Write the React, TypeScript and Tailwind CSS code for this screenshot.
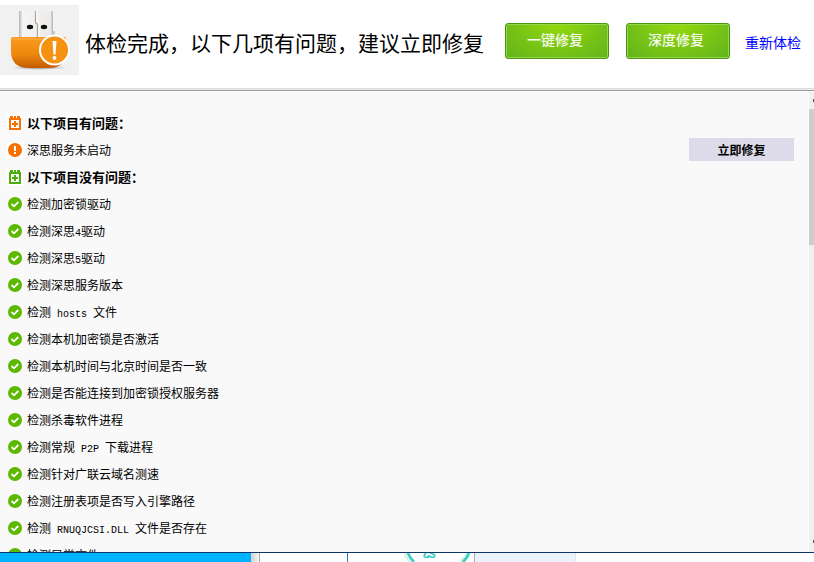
import type { ReactNode } from 'react';

type Status = 'ok' | 'error';

type CheckItem = {
    text: ReactNode;
    status: Status;
};

const Latin = ({ children }: { children: string }) => (
    <span className="whitespace-pre font-['Liberation_Mono',monospace] text-[10px] leading-none">{children}</span>
);

const problems: CheckItem[] = [{ text: '深思服务未启动', status: 'error' }];

const passed: CheckItem[] = [
    { text: '检测加密锁驱动', status: 'ok' },
    { text: <>检测深思<Latin>4</Latin>驱动</>, status: 'ok' },
    { text: <>检测深思<Latin>5</Latin>驱动</>, status: 'ok' },
    { text: '检测深思服务版本', status: 'ok' },
    { text: <>检测<Latin>{' hosts '}</Latin>文件</>, status: 'ok' },
    { text: '检测本机加密锁是否激活', status: 'ok' },
    { text: '检测本机时间与北京时间是否一致', status: 'ok' },
    { text: '检测是否能连接到加密锁授权服务器', status: 'ok' },
    { text: '检测杀毒软件进程', status: 'ok' },
    { text: <>检测常规<Latin>{' P2P '}</Latin>下载进程</>, status: 'ok' },
    { text: '检测针对广联云域名测速', status: 'ok' },
    { text: '检测注册表项是否写入引擎路径', status: 'ok' },
    { text: <>检测<Latin>{' RNUQJCSI.DLL '}</Latin>文件是否存在</>, status: 'ok' },
    { text: '检测异常文件', status: 'ok' },
];

function UsbIcon() {
    return (
        <svg className="h-[70px] w-[79px] shrink-0" viewBox="0 0 79 70">
            <defs>
                <linearGradient id="metal" x1="0" x2="1">
                    <stop offset="0" stopColor="#b4b4b4" />
                    <stop offset="0.1" stopColor="#f6f5f3" />
                    <stop offset="0.88" stopColor="#ecebe9" />
                    <stop offset="0.92" stopColor="#bcbcbc" />
                    <stop offset="1" stopColor="#d2d2d2" />
                </linearGradient>
                <linearGradient id="body" x1="0" y1="0" x2="0" y2="1">
                    <stop offset="0" stopColor="#f99a1e" />
                    <stop offset="0.55" stopColor="#ee890f" />
                    <stop offset="1" stopColor="#c45a00" />
                </linearGradient>
                <radialGradient id="shade">
                    <stop offset="0" stopColor="#444" stopOpacity="0.8" />
                    <stop offset="1" stopColor="#999" stopOpacity="0" />
                </radialGradient>
            </defs>
            <rect width="79" height="70" fill="#f1f1f1" />
            <ellipse cx="39" cy="62.5" rx="29" ry="2.5" fill="url(#shade)" />
            <path d="M19 6h34v20h2v7H19z" fill="url(#metal)" />
            <path d="M35.5 6v12l2 1v14" fill="none" stroke="#a5a5a5" strokeWidth="1.2" />
            <path d="M37 6v11l2 1v15" fill="none" stroke="#fff" strokeWidth="1" />
            <ellipse cx="30" cy="22" rx="3.2" ry="2.2" fill="#111" />
            <ellipse cx="44" cy="22" rx="3.2" ry="2.2" fill="#111" />
            <path d="M11 34q0-2 2-2h51q2 0 2 2v12q0 17-17 17H29Q11 63 11 46z" fill="url(#body)" />
            <path d="M12 34h53" stroke="#fdb34b" strokeWidth="1" />
            <circle cx="54.5" cy="45" r="15.5" fill="#fff" />
            <circle cx="54.5" cy="45" r="13.5" fill="#f59211" />
            <path d="M52.5 36h4l-1 13.5h-2z" fill="#fff" />
            <circle cx="54.5" cy="53" r="1.9" fill="#fff" />
        </svg>
    );
}

function GroupIcon({ color }: { color: string }) {
    return (
        <svg className="size-4 shrink-0 bg-white" viewBox="0 0 16 16" fill={color} shapeRendering="crispEdges">
            <path d="M3 1h3v2H3zM7 1h2v2H7zM10 1h3v2h-3z" />
            <path fillRule="evenodd" d="M2 3h12v12H2zM4 5v8h8V5z" />
            <path d="M7 6h2v2h2v2H9v2H7v-2H5V8h2z" />
        </svg>
    );
}

function StatusIcon({ status }: { status: Status }) {
    if (status === 'error') {
        return (
            <svg className="size-4 shrink-0 bg-white" viewBox="0 0 16 16">
                <circle cx="8" cy="8" r="7" fill="#f87000" />
                <path d="M7 4h2v5H7zM7 10h2v2H7z" fill="#fff" />
            </svg>
        );
    }
    return (
        <svg className="size-4 shrink-0" viewBox="0 0 16 16">
            <circle cx="8" cy="8" r="7" fill="#5cb800" />
            <path d="M4.5 8 7 10.3l4.3-4.3" fill="none" stroke="#fff" strokeWidth="1.8" />
        </svg>
    );
}

function GreenButton({ children }: { children: string }) {
    return (
        <button
            type="button"
            className="h-9 w-[104px] shrink-0 rounded-[3px] border border-[#489613] bg-radial-[at_50%_0%] from-[#93d90c] to-[#61b31d] pr-1 pb-1 text-sm font-medium text-[#f7fbef] shadow-[inset_0_0_0_1px_#98d64c]"
        >
            {children}
        </button>
    );
}

function Heading({ color, children }: { color: string; children: string }) {
    return (
        <h2 className="flex h-[27px] items-center gap-1 text-[13px] font-bold">
            <GroupIcon color={color} />
            {children}
        </h2>
    );
}

function Row({ item }: { item: CheckItem }) {
    return (
        <li className="flex h-[27px] items-center gap-1">
            <StatusIcon status={item.status} />
            <span className="leading-4">{item.text}</span>
            {item.status === 'error' && (
                <button type="button" className="mr-[14px] ml-auto h-[23px] w-[105px] bg-[#dddbe9] text-xs font-bold">
                    立即修复
                </button>
            )}
        </li>
    );
}

function Scrollbar() {
    return (
        <div className="flex w-[6px] shrink-0 flex-col items-end border-l border-white bg-[#f0f0f0]">
            <div className="flex h-[17px] w-full items-center justify-end">
                <span className="h-[3px] w-px bg-[#505050]" />
            </div>
            <div className="h-[136px] w-full bg-[#cdcdcd]" />
            <div className="mt-auto flex h-[22px] w-full items-center justify-end">
                <span className="h-[3px] w-px bg-[#505050]" />
            </div>
        </div>
    );
}

// Slice of the desktop visible under the window
function Backdrop() {
    return (
        <div className="flex h-[10px] shrink-0 border-t border-[#0c3768] bg-white">
            <div className="w-[251px] bg-[#00b3ff]" />
            <div className="w-[9px] border-r border-[#aaa] bg-linear-to-r from-[#d2d2d2] to-[#f4f4f4]" />
            <div className="w-[88px] border-r border-[#2d7bcb]" />
            <div className="flex w-[127px] justify-end border-r border-[#aaa]">
                <svg className="h-[9px] w-[70px]" viewBox="0 0 70 9" fill="none">
                    <path d="M1 0q3 6 8 9M65 0q-3 6-8 9" stroke="#d8f4ef" strokeWidth="5" />
                    <path d="M4 0q2 5 6 9M65 0q-2 5-6 9" stroke="#3bcdc4" strokeWidth="2.5" />
                    <path d="M22 0q-3 3-1 4 3 1 4-1 3 2 5 1 2-2-1-3l-3-1" stroke="#3bcdc4" strokeWidth="1.8" />
                </svg>
            </div>
            <div className="w-[101px] border-r border-[#e2e6ec] bg-[#ecf2fc]" />
        </div>
    );
}

export default function App() {
    return (
        <div className="flex h-screen flex-col overflow-hidden bg-white font-['Noto_Sans_CJK_SC',sans-serif] text-xs text-black">
            <header className="flex h-[88px] shrink-0 items-center pb-2">
                <UsbIcon />
                <h1 className="ml-[6px] shrink-0 pt-1 text-[21px] leading-8 whitespace-nowrap">
                    体检完成，以下几项有问题，建议立即修复
                </h1>
                <div className="ml-[21px] flex gap-[17px] pt-[2px]">
                    <GreenButton>一键修复</GreenButton>
                    <GreenButton>深度修复</GreenButton>
                </div>
                <a href="#recheck" className="ml-[15px] shrink-0 pt-1 text-sm whitespace-nowrap text-[#0000ff]">
                    重新体检
                </a>
            </header>

            <div className="h-[3px] shrink-0 border-t border-b border-t-[#dcdcdc] border-b-[#999] bg-[#eee]" />

            <main className="flex min-h-0 flex-1 overflow-hidden border-t border-white bg-[#f9f9f9]">
                <div className="min-w-0 flex-1 overflow-hidden pt-[17px] pl-[7px]">
                    <Heading color="#f87000">以下项目有问题：</Heading>
                    <ul>
                        {problems.map((item, i) => (
                            <Row key={i} item={item} />
                        ))}
                    </ul>
                    <Heading color="#4caf0c">以下项目没有问题：</Heading>
                    <ul>
                        {passed.map((item, i) => (
                            <Row key={i} item={item} />
                        ))}
                    </ul>
                </div>
                <Scrollbar />
            </main>

            <Backdrop />
        </div>
    );
}
